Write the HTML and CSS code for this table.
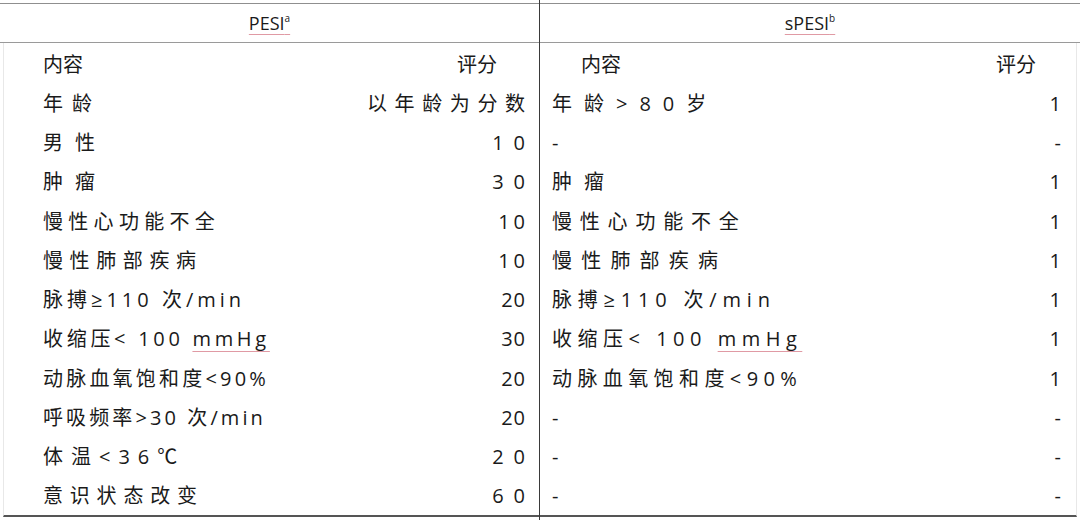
FILE: index.html
```html
<!DOCTYPE html>
<html lang="zh">
<head>
<meta charset="utf-8">
<link rel="stylesheet" href="styles.css">
</head>
<body>
<div class="table">
  <div class="col col-left">
    <div class="head"><span class="title">PESI<sup>a</sup></span></div>
    <div class="rows">
      <div class="row sub"><span class="c">内容</span><span class="v">评分</span></div>
      <div class="row"><span class="c" style="--ls:9px">年龄</span><span class="v" style="--ls:7.6px">以年龄为分数</span></div>
      <div class="row"><span class="c" style="--ls:12px">男性</span><span class="v" style="--ls:10px">10</span></div>
      <div class="row"><span class="c" style="--ls:12px">肿瘤</span><span class="v" style="--ls:10px">30</span></div>
      <div class="row"><span class="c" style="--ls:5.3px">慢性心功能不全</span><span class="v" style="--ls:4px">10</span></div>
      <div class="row"><span class="c" style="--ls:6.6px">慢性肺部疾病</span><span class="v" style="--ls:4px">10</span></div>
      <div class="row"><span class="c" style="--ls:4px">脉搏≥110 次/min</span><span class="v" style="--ls:1px">20</span></div>
      <div class="row"><span class="c" style="--ls:3.7px">收缩压&lt; 100 <u class="sq">mmHg</u></span><span class="v" style="--ls:1px">30</span></div>
      <div class="row"><span class="c" style="--ls:3.2px">动脉血氧饱和度&lt;90%</span><span class="v" style="--ls:1px">20</span></div>
      <div class="row"><span class="c" style="--ls:3.1px">呼吸频率&gt;30 次/min</span><span class="v" style="--ls:1px">20</span></div>
      <div class="row"><span class="c" style="--ls:8px">体温&lt;36℃</span><span class="v" style="--ls:10px">20</span></div>
      <div class="row"><span class="c" style="--ls:6.8px">意识状态改变</span><span class="v" style="--ls:10px">60</span></div>
    </div>
  </div>
  <div class="col col-right">
    <div class="head"><span class="title">sPESI<sup>b</sup></span></div>
    <div class="rows">
      <div class="row sub"><span class="c">内容</span><span class="v">评分</span></div>
      <div class="row"><span class="c" style="--ls:12px">年龄&gt;80岁</span><span class="v">1</span></div>
      <div class="row"><span class="c">-</span><span class="v">-</span></div>
      <div class="row"><span class="c" style="--ls:12px">肿瘤</span><span class="v">1</span></div>
      <div class="row"><span class="c" style="--ls:7.8px">慢性心功能不全</span><span class="v">1</span></div>
      <div class="row"><span class="c" style="--ls:9.2px">慢性肺部疾病</span><span class="v">1</span></div>
      <div class="row"><span class="c" style="--ls:5.8px">脉搏≥110 次/min</span><span class="v">1</span></div>
      <div class="row"><span class="c" style="--ls:5.5px">收缩压&lt; 100 <u class="sq">mmHg</u></span><span class="v">1</span></div>
      <div class="row"><span class="c" style="--ls:5.4px">动脉血氧饱和度&lt;90%</span><span class="v">1</span></div>
      <div class="row"><span class="c">-</span><span class="v">-</span></div>
      <div class="row"><span class="c">-</span><span class="v">-</span></div>
      <div class="row"><span class="c">-</span><span class="v">-</span></div>
    </div>
  </div>
</div>
</body>
</html>
```

FILE: styles.css
```css
html, body {
  margin: 0;
  padding: 0;
  background: #ffffff;
}
body {
  width: 1080px;
  height: 520px;
  overflow: hidden;
  font-family: "Open Sans", "Noto Sans CJK SC", sans-serif;
  color: #1a1a1a;
}
.table {
  display: grid;
  grid-template-columns: 540px 540px;
  height: 520px;
}
.col {
  display: flex;
  flex-direction: column;
}
.col-left {
  border-right: 1px solid #3a3a3a;
}
.head {
  margin-top: 3px;
  height: 38px;
  border-top: 1px solid #8f8f8f;
  border-bottom: 1px solid #9a9a9a;
  display: flex;
  align-items: center;
  justify-content: center;
  font-size: 18px;
}
.title {
  text-decoration: underline;
  text-decoration-color: #e09aa4;
  text-underline-offset: 4px;
  text-decoration-thickness: 1px;
}
.title sup {
  font-size: 10px;
  vertical-align: 8px;
  line-height: 0;
}
.rows {
  border-bottom: 2px solid #555555;
  height: 472px;
  padding-top: 1px;
  box-sizing: border-box;
  height: 474px;
  display: flex;
  flex-direction: column;
}
.col-left .rows {
  margin-left: 3px;
  border-left: 1px solid #e8e8e8;
  padding-left: 39px;
  padding-right: 14px;
}
.col-right .rows {
  margin-right: 3px;
  border-right: 1px solid #e8e8e8;
  padding-left: 12px;
  padding-right: 15px;
}
.row {
  flex: 1;
  display: flex;
  align-items: center;
  justify-content: space-between;
  font-size: 20px;
  line-height: 1;
  padding-top: 2px;
}
.c, .v {
  letter-spacing: var(--ls, 0px);
  white-space: nowrap;
}
.v {
  margin-right: calc(-1 * var(--ls, 0px));
}
.col-left .sub .v {
  margin-right: 28px;
}
.col-right .sub .c {
  margin-left: 29px;
}
.col-right .sub .v {
  margin-right: 25px;
}
.sq {
  text-decoration: underline;
  text-decoration-color: #e09aa4;
  text-underline-offset: 5px;
  text-decoration-thickness: 1px;
}
```
